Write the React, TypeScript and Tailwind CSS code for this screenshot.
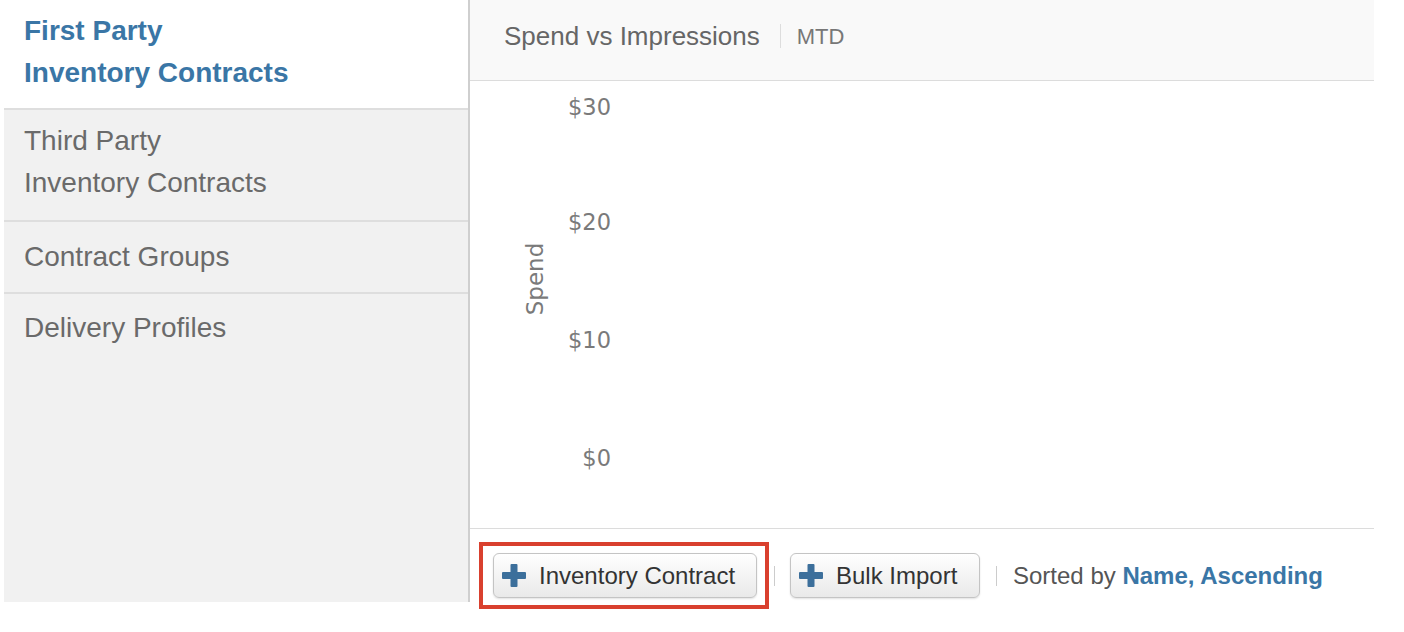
import React from 'react';

const navItems = [
  { lines: ['First Party', 'Inventory Contracts'], active: true, h: 'h-[110px]', pad: 'pt-[10px]' },
  { lines: ['Third Party', 'Inventory Contracts'], active: false, h: 'h-[112px]', pad: 'pt-[10px]' },
  { lines: ['Contract Groups'], active: false, h: 'h-[72px]', pad: 'pt-[14px]' },
];

function PlusIcon() {
  return (
    <svg width="24" height="23" viewBox="0 0 24 23" className="shrink-0">
      <rect x="8.5" y="0" width="7" height="23" rx="1" fill="#3c6f9b" />
      <rect x="0" y="8" width="24" height="7" rx="1" fill="#3c6f9b" />
    </svg>
  );
}

function Button({ label, className }: { label: string; className?: string }) {
  return (
    <button
      className={
        'flex h-[45px] items-center gap-[13px] rounded-[6px] border border-[#c4c4c4] bg-gradient-to-b from-white to-[#e9e9e9] pl-[8px] text-[24px] text-[#333] shadow-[0_1px_2px_rgba(0,0,0,0.12)] ' +
        (className ?? '')
      }
    >
      <PlusIcon />
      <span>{label}</span>
    </button>
  );
}

function Chart() {
  const ticks = [
    { label: '$30', y: 34 },
    { label: '$20', y: 149 },
    { label: '$10', y: 267 },
    { label: '$0', y: 385 },
  ];
  return (
    <svg width="904" height="447" className="block">
      <g fill="#7a7a7a" fontFamily="'DejaVu Sans', sans-serif" fontSize="22.5">
        {ticks.map((t) => (
          <text key={t.label} x="141" y={t.y} textAnchor="end">
            {t.label}
          </text>
        ))}
        <text x="0" y="0" textAnchor="middle" fontSize="23" transform="translate(73 198) rotate(-90)">
          Spend
        </text>
      </g>
    </svg>
  );
}

export default function App() {
  return (
    <div className="flex h-[632px] w-[1404px] items-start bg-white font-['Liberation_Sans',Arial,sans-serif]">
      {/* Sidebar */}
      <div className="ml-[4px] flex h-[602px] w-[466px] flex-col border-r-2 border-[#cfcfcf] bg-[#f1f1f1]">
        {navItems.map((item) => (
          <div
            key={item.lines.join()}
            className={
              'shrink-0 border-b-2 border-[#dedede] pl-[20px] text-[28px] leading-[42px] ' +
              item.h +
              ' ' +
              item.pad +
              (item.active ? ' bg-white font-bold text-[#3a76a6]' : ' text-[#6a6a6a]')
            }
          >
            {item.lines.map((l) => (
              <div key={l}>{l}</div>
            ))}
          </div>
        ))}
        <div className="pl-[20px] pt-[13px] text-[28px] leading-[42px] text-[#6a6a6a]">Delivery Profiles</div>
      </div>

      {/* Main */}
      <div className="flex w-[904px] flex-col">
        <div className="flex h-[81px] items-center border-b border-[#dcdcdc] bg-[#f9f9f9] pb-[8px] pl-[34px]">
          <span className="text-[26px] text-[#666]">Spend vs Impressions</span>
          <span className="ml-[20px] mr-[16px] h-[24px] w-px bg-[#dddddd]" />
          <span className="text-[22px] text-[#777]">MTD</span>
        </div>

        <Chart />

        <div className="flex items-center border-t border-[#dcdcdc] pl-[9px] pt-[13px]">
          <div className="border-4 border-[#d9402e] py-[7px] pl-[10px] pr-[8px]">
            <Button label="Inventory Contract" className="w-[264px]" />
          </div>
          <span className="ml-[5px] mr-[15px] h-[20px] w-px bg-[#cccccc]" />
          <Button label="Bulk Import" className="w-[190px]" />
          <span className="mx-[16px] h-[20px] w-px bg-[#cccccc]" />
          <span className="text-[24px] text-[#555]">
            Sorted by <span className="font-bold text-[#3a76a6]">Name, Ascending</span>
          </span>
        </div>
      </div>
    </div>
  );
}
